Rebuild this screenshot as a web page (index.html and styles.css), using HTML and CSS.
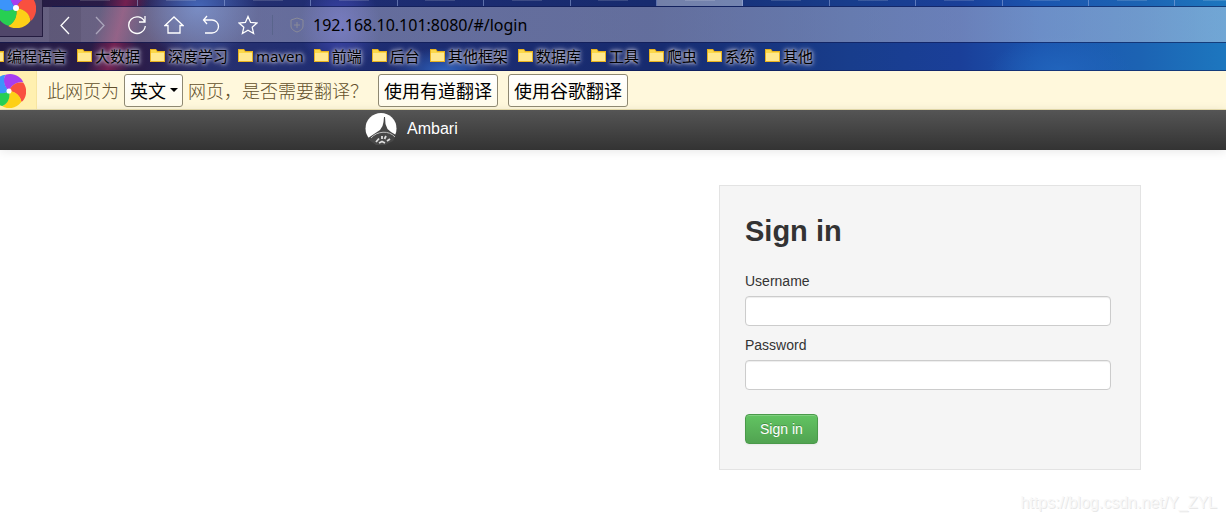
FILE: index.html
```html
<!DOCTYPE html>
<html lang="zh-CN">
<head>
<meta charset="utf-8">
<title>Ambari</title>
<link rel="stylesheet" href="styles.css">
</head>
<body>
<svg class="defs" width="0" height="0" aria-hidden="true">
  <symbol id="folder" viewBox="0 0 15 13">
    <path d="M0 0H6L7.500 2H15V13H0Z" fill="#e9b31f"/>
    <path d="M1 1H5.500L7 3H14V5H1Z" fill="#fbd84a"/>
    <path d="M1 4H14V12H1Z" fill="#ffe88f"/>
  </symbol>
  <symbol id="pinwheel" viewBox="-20 -20 40 40">
    <path d="M0 0C-6-5-8-13-4-19C5-22 14-17 17-10C10-11 3-7 0 0Z" fill="#a83df0"/>
    <path d="M0 0C-6-5-8-13-4-19C5-22 14-17 17-10C10-11 3-7 0 0Z" fill="#f9503f" transform="rotate(72)"/>
    <path d="M0 0C-6-5-8-13-4-19C5-22 14-17 17-10C10-11 3-7 0 0Z" fill="#fdd017" transform="rotate(144)"/>
    <path d="M0 0C-6-5-8-13-4-19C5-22 14-17 17-10C10-11 3-7 0 0Z" fill="#27cf52" transform="rotate(216)"/>
    <path d="M0 0C-6-5-8-13-4-19C5-22 14-17 17-10C10-11 3-7 0 0Z" fill="#3c94fa" transform="rotate(288)"/>
    <circle r="3" fill="#fff"/>
  </symbol>
</svg>

<header class="browser">
  <div class="tabs">
    <span class="tab"></span><span class="tab"></span><span class="tab"></span><span class="tab"></span><span class="tab"></span><span class="tab"></span><span class="tab"></span><span class="tab tab-active"></span><span class="tab"></span><span class="tab"></span><span class="tab"></span><span class="tab"></span><span class="tab"></span><span class="tab"></span>
  </div>
  <div class="toolbar">
    <button class="tool tool-back" aria-label="后退"><svg viewBox="0 0 20 20"><path d="M14 2L6 10.500L14 19"/></svg></button>
    <button class="tool tool-muted" aria-label="前进"><svg viewBox="0 0 20 20"><path d="M6 2L14 10.500L6 19"/></svg></button>
    <button class="tool" aria-label="刷新"><svg viewBox="0 0 20 20"><path d="M17.500 6.500A8.300 8.300 0 1 0 18.300 11M18 1V7H12"/></svg></button>
    <button class="tool" aria-label="主页"><svg viewBox="0 0 20 20"><path d="M1 10.500L10 2L19 10.500H16V18H4V10.500Z"/></svg></button>
    <button class="tool" aria-label="撤销"><svg viewBox="0 0 20 20"><path d="M6 1L2.500 5L6 9M2.500 5H11A6.500 6.500 0 0 1 11 18H4"/></svg></button>
    <button class="tool" aria-label="收藏"><svg viewBox="0 0 20 20"><path d="M10 1.500L12.600 7.400L19 8L14.200 12.300L15.600 18.500L10 15.300L4.400 18.500L5.800 12.300L1 8L7.400 7.400Z"/></svg></button>
    <span class="divider"></span>
    <svg class="shield" viewBox="0 0 14 16"><path d="M7 1L13 3V9C13 12 10 14 7 15C4 14 1 12 1 9V3ZM7 5V11M4 8H10"/></svg>
    <input class="address" type="text" aria-label="地址" value="192.168.10.101:8080/#/login">
  </div>
  <nav class="bookmarks">
    <a href="#"><svg><use href="#folder"/></svg>编程语言</a>
    <a href="#"><svg><use href="#folder"/></svg>大数据</a>
    <a href="#"><svg><use href="#folder"/></svg>深度学习</a>
    <a href="#"><svg><use href="#folder"/></svg>maven</a>
    <a href="#"><svg><use href="#folder"/></svg>前端</a>
    <a href="#"><svg><use href="#folder"/></svg>后台</a>
    <a href="#"><svg><use href="#folder"/></svg>其他框架</a>
    <a href="#"><svg><use href="#folder"/></svg>数据库</a>
    <a href="#"><svg><use href="#folder"/></svg>工具</a>
    <a href="#"><svg><use href="#folder"/></svg>爬虫</a>
    <a href="#"><svg><use href="#folder"/></svg>系统</a>
    <a href="#"><svg><use href="#folder"/></svg>其他</a>
  </nav>
  <div class="brand-box"><svg><use href="#pinwheel"/></svg></div>
</header>

<div class="translate">
  <div class="translate-logo"><svg><use href="#pinwheel"/></svg></div>
  <label for="lang">此网页为</label>
  <div class="select-wrap">
    <select id="lang"><option>英文</option></select>
    <svg viewBox="0 0 8 4"><path d="M0 0H8L4 4Z"/></svg>
  </div>
  <span class="question">网页，是否需要翻译？</span>
  <button>使用有道翻译</button>
  <button>使用谷歌翻译</button>
</div>

<div class="navbar">
  <a class="brand" href="#">
    <svg viewBox="0 0 32 32">
      <circle cx="16" cy="15.500" r="15.500" fill="#fff"/>
      <path d="M19 4H20L20.500 11L22.500 16L26 19L31 22L28 28L20 32H11L5.500 28L3 25L9 21L15 17L17.500 13L18.500 9Z" fill="#484848"/>
      <path d="M6 25C12 18 24 17 30 24" fill="none" stroke="#c0c0c0" stroke-width="1"/>
      <path d="M11 29L14 25.500M17 26V23M21 23L19.500 26M25 26L22 28M14 30L17 28.500L20 30" fill="none" stroke="#ddd" stroke-width="1.800"/>
    </svg>
    Ambari
  </a>
</div>

<main class="content">
  <form class="login">
    <h1>Sign in</h1>
    <label for="user">Username</label>
    <input id="user" type="text">
    <label for="pass">Password</label>
    <input id="pass" type="password">
    <button type="button">Sign in</button>
  </form>
</main>
<div class="watermark">https://blog.csdn.net/Y_ZYL</div>
</body>
</html>
```
FILE: styles.css
```css
* { box-sizing: border-box; }

body {
  margin: 0;
  min-height: 100vh;
  position: relative;
  background: #fff;
  color: #333;
  font: 14px/20px "Liberation Sans", Arial, sans-serif;
}

button, input, select { font: inherit; margin: 0; }
.defs { position: absolute; }

.browser {
  position: relative;
  overflow: hidden;
  font-family: "Noto Sans", "Noto Sans CJK SC", sans-serif;
  background:
    radial-gradient(ellipse 50px 24px at 444px 71px, #2f62bd, transparent),
    radial-gradient(ellipse 60px 50px at 198px 8px, #4567b8, transparent),
    radial-gradient(ellipse 40px 50px at 340px 25px, #4048b0, transparent),
    radial-gradient(ellipse 70px 35px at 1060px 71px, #2164bc, transparent),
    linear-gradient(105deg, transparent 100px, #742050 122px, transparent 144px),
    linear-gradient(90deg, #231b43 0, #2b1c49 140px, #27306f 210px, #1f2d72 330px, #172b6f 650px, #183d8c 850px, #1a3f99 960px, #1b55af 1040px, #1c63b3 1140px, #1d77bf 1226px);
}

.tabs {
  display: flex;
  height: 7px;
  margin: 0 -36px 0 52px;
  border-bottom: 1px solid rgba(15, 25, 80, .6);
}
.tab {
  flex: 1;
  border-right: 1px solid rgba(160, 180, 230, .5);
  background: linear-gradient(rgba(255, 255, 255, .15), rgba(255, 255, 255, .15)) center top / 30px 1px no-repeat;
}
.tab-active { background-color: rgba(255, 255, 255, .4); }

.toolbar {
  display: flex;
  align-items: center;
  height: 35px;
  padding-left: 49px;
  background: linear-gradient(90deg, rgba(190, 190, 210, .42), rgba(195, 195, 215, .45) 800px, rgba(215, 225, 240, .45));
}
.tool {
  display: flex;
  align-items: center;
  justify-content: center;
  width: 37px;
  height: 35px;
  padding: 0;
  border: 0;
  background: none;
}
.tool-back { width: 32px; background: rgba(30, 20, 50, .1); }
.tool svg { width: 20px; height: 20px; }
.tool path { fill: none; stroke: #fff; stroke-width: 1.3; }
.tool-muted path { stroke: #aaa5bb; }
.divider { width: 1px; height: 20px; margin: 0 17px 0 6px; background: #59648c; }
.shield { width: 14px; height: 16px; }
.shield path { fill: none; stroke: #8a8b98; stroke-width: 1; }
.address {
  flex: 1;
  min-width: 0;
  height: 30px;
  padding: 0 0 0 9px;
  border: 0;
  background: none;
  color: #000;
  font-size: 16px;
}

.bookmarks {
  display: flex;
  align-items: center;
  gap: 10px;
  height: 29px;
  margin-left: -11px;
  padding-bottom: 2px;
  border-top: 1px solid rgba(15, 25, 80, .6);
  border-bottom: 1px solid rgba(15, 25, 80, .6);
  white-space: nowrap;
}
.bookmarks a {
  display: flex;
  align-items: center;
  gap: 3px;
  color: #000;
  font-size: 15px;
  text-decoration: none;
  text-shadow: 0 0 3px #b5b5cd, 0 0 4px #b5b5cd, 0 0 6px #b5b5cd;
}
.bookmarks svg { width: 15px; height: 13px; }

.brand-box {
  position: absolute;
  top: 0;
  left: 0;
  width: 43px;
  height: 37px;
  overflow: hidden;
  border: solid #241c40;
  border-width: 0 1px 1px 0;
  background: #50466a;
}
.brand-box svg { display: block; width: 40px; height: 40px; margin: -12px 0 0 -4px; }

.translate {
  display: flex;
  align-items: center;
  height: 39px;
  border-bottom: 1px solid #eadfae;
  background: #fff8dc;
  color: #62502b;
  font: 18px/24px "Noto Sans CJK SC", sans-serif;
  white-space: nowrap;
}
.translate label,
.question { font-weight: 300; }
.translate-logo {
  align-self: stretch;
  width: 37px;
  margin-right: 10px;
  overflow: hidden;
  border-right: 1px solid #f7e5a0;
  background: #fff0b0;
}
.translate-logo svg { display: block; width: 34px; height: 34px; margin: 3px 0 0 -8px; }
.select-wrap { display: grid; align-items: center; width: 59px; margin: 0 5px; }
.select-wrap > * { grid-area: 1 / 1; }
.select-wrap svg { justify-self: end; width: 8px; height: 4px; margin-right: 5px; pointer-events: none; }
.translate select,
.translate button {
  height: 33px;
  padding: 0 5px;
  border: 1px solid #8e8872;
  border-radius: 3px;
  background: linear-gradient(#fff, #fffbea);
  color: #000;
}
.translate select { width: 100%; appearance: none; }
.translate button { margin-left: 10px; }

.navbar {
  display: flex;
  height: 40px;
  padding-left: 365px;
  background: linear-gradient(#555, #333);
  box-shadow: 0 1px 10px rgba(0, 0, 0, .1);
}
.brand {
  display: flex;
  align-items: center;
  gap: 10px;
  height: 37px;
  color: #fff;
  font-size: 16px;
  text-decoration: none;
}
.brand svg { width: 32px; height: 32px; }

.content { display: flex; justify-content: flex-end; padding: 35px 85px 35px 20px; }
.login {
  width: 422px;
  padding: 25px 29px 25px 25px;
  border: 1px solid #e3e3e3;
  background: #f5f5f5;
}
.login h1 { margin: 0 0 20px; font-size: 29px; line-height: 40px; }
.login label { display: block; margin-bottom: 5px; }
.login input {
  display: block;
  width: 100%;
  height: 30px;
  margin-bottom: 9px;
  padding: 4px 6px;
  border: 1px solid #ccc;
  border-radius: 4px;
  background: #fff;
  box-shadow: inset 0 1px 1px rgba(0, 0, 0, .075);
}
.login button {
  display: block;
  height: 30px;
  margin-top: 24px;
  padding: 0 14px;
  border: 1px solid #4a9a4a;
  border-radius: 4px;
  background: linear-gradient(#62c462, #51a351);
  box-shadow: inset 0 1px 0 rgba(255, 255, 255, .2), 0 1px 2px rgba(0, 0, 0, .05);
  color: #fff;
  text-shadow: 0 -1px 0 rgba(0, 0, 0, .25);
}

.watermark {
  position: absolute;
  right: 9px;
  bottom: 8px;
  color: #f8f8f8;
  font-size: 16px;
  text-shadow: 1px 1px 0 #e8e8e8;
}
```
